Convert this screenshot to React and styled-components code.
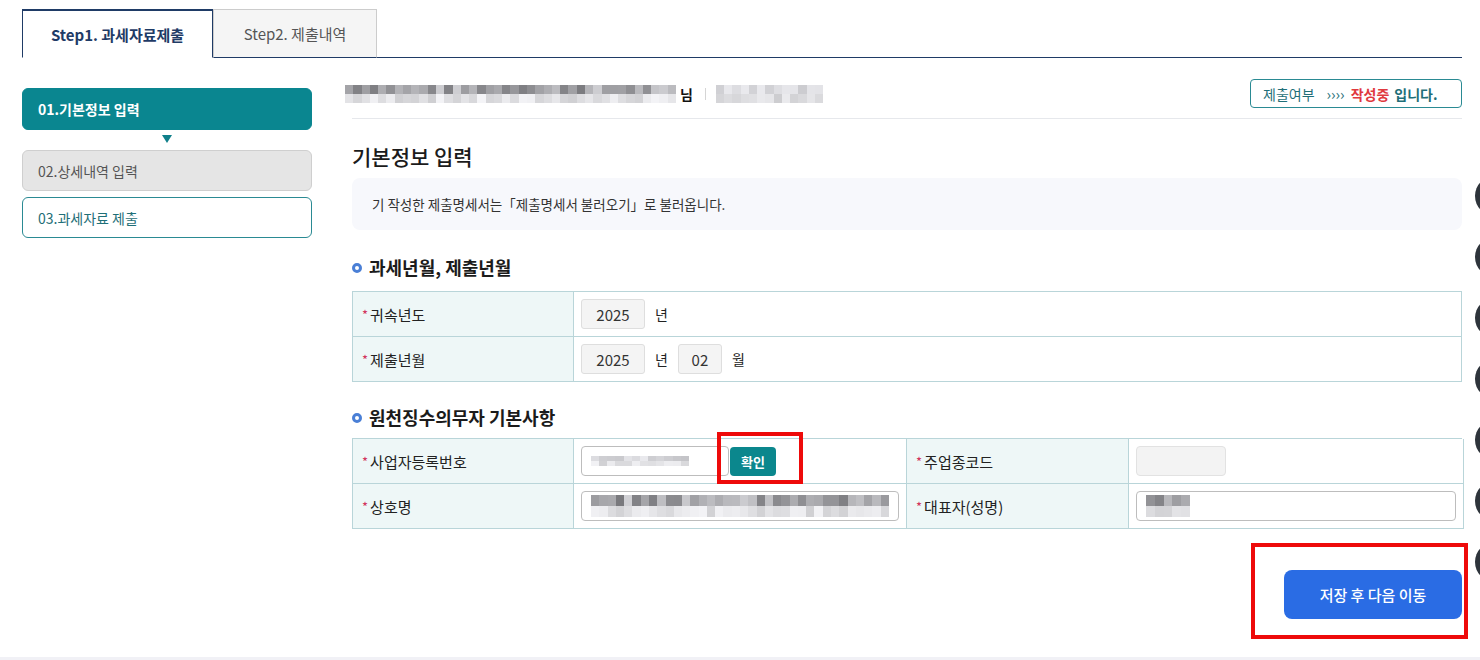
import React from 'react'
import styled, { createGlobalStyle } from 'styled-components';

const GlobalStyle = createGlobalStyle`
  html, body {
    margin: 0;
    padding: 0;
    overflow: hidden;
    background: #fff;
  }
  body {
    font-family: "Noto Sans CJK KR", "Noto Sans", sans-serif;
    color: #222;
  }
  * { box-sizing: border-box; }
`;

const NAVY = '#1f3b66';
const TEAL = '#0a8690';
const LINE = '#b9d5d9';

// pixelated blur blocks stand in for masked personal info
const mosaic = (seed, count, dark) => {
  let s = seed;
  const rnd = () => {
    s = (s * 9301 + 49297) % 233280;
    return s / 233280;
  };
  const step = 100 / count;
  const top = [];
  const bottom = [];
  for (let i = 0; i < count; i++) {
    const a = dark ? 120 + Math.floor(rnd() * 90) : 195 + Math.floor(rnd() * 40);
    const b = 205 + Math.floor(rnd() * 40);
    top.push(`rgb(${a},${a},${a + 4}) ${i * step}% ${(i + 1) * step}%`);
    bottom.push(`rgb(${b},${b},${b + 3}) ${i * step}% ${(i + 1) * step}%`);
  }
  return `linear-gradient(90deg, ${top.join(',')}) top / 100% 50% no-repeat, linear-gradient(90deg, ${bottom.join(',')}) bottom / 100% 50% no-repeat`;
};

const App = () => {
  return (
    <>
      <GlobalStyle />
      <Page>
        <TabBar>
          <Tab active>Step1. 과세자료제출</Tab>
          <Tab>Step2. 제출내역</Tab>
        </TabBar>

        <Body>
          <Sidebar>
            <StepItem variant='active'>01.기본정보 입력</StepItem>
            <StepArrow />
            <StepItem variant='disabled'>02.상세내역 입력</StepItem>
            <StepItem variant='outline'>03.과세자료 제출</StepItem>
          </Sidebar>

          <Main>
            <UserRow>
              <UserInfo>
                <Mosaic w={331} h={18} style={{ background: mosaic(7, 40, true) }} />
                <Nim>님</Nim>
                <Sep />
                <Mosaic w={107} h={18} style={{ background: mosaic(3, 13, false) }} />
              </UserInfo>
              <StatusBox>
                <span>제출여부</span>
                <Arrows>››››</Arrows>
                <Red>작성중</Red>
                <b>입니다.</b>
              </StatusBox>
            </UserRow>

            <PageTitle>기본정보 입력</PageTitle>
            <InfoBox>기 작성한 제출명세서는「제출명세서 불러오기」로 불러옵니다.</InfoBox>

            <SectionTitle mt={25} mb={12}>과세년월, 제출년월</SectionTitle>
            <FormGrid cols='221px 1fr'>
              <Label><Req>*</Req>귀속년도</Label>
              <Value>
                <YearBox w={64}>2025</YearBox>
                <Unit>년</Unit>
              </Value>
              <Label><Req>*</Req>제출년월</Label>
              <Value>
                <YearBox w={64}>2025</YearBox>
                <Unit>년</Unit>
                <YearBox w={44}>02</YearBox>
                <Unit>월</Unit>
              </Value>
            </FormGrid>

            <SectionTitle mt={23} mb={9}>원천징수의무자 기본사항</SectionTitle>
            <FormGrid cols='221px 333px 222px 1fr'>
              <Label><Req>*</Req>사업자등록번호</Label>
              <Value>
                <TextInput w={148}>
                  <Mosaic w={98} h={10} style={{ background: mosaic(11, 12, false) }} />
                </TextInput>
                <Marked inset='-15px -27px -8px -12px'>
                  <CheckButton>확인</CheckButton>
                </Marked>
              </Value>
              <Label><Req>*</Req>주업종코드</Label>
              <Value>
                <DisabledBox />
              </Value>
              <Label><Req>*</Req>상호명</Label>
              <Value>
                <TextInput w={320}>
                  <Mosaic w={298} h={22} style={{ background: mosaic(5, 36, true) }} />
                </TextInput>
              </Value>
              <Label><Req>*</Req>대표자(성명)</Label>
              <Value>
                <TextInput w={320}>
                  <Mosaic w={44} h={22} style={{ background: mosaic(2, 5, true) }} />
                </TextInput>
              </Value>
            </FormGrid>

            <Actions>
              <Marked inset='-27px -6px -20px -33px'>
                <PrimaryButton>저장 후 다음 이동</PrimaryButton>
              </Marked>
            </Actions>
          </Main>
        </Body>
        <Footer />
      </Page>

      <FloatRail>
        {[0, 1, 2, 3, 4, 5, 6].map((i) => <FloatDot key={i} />)}
      </FloatRail>
    </>
  )
}

const Page = styled.div`
  width: 1480px;
  height: 660px;
  padding: 9px 18px 0 22px;
  display: flex;
  flex-direction: column;
`;

const TabBar = styled.div`
  display: flex;
  border-bottom: 1px solid ${NAVY};
  height: 49px;
  flex-shrink: 0;
`;

const Tab = styled.div`
  height: 49px;
  margin-bottom: -1px;
  display: flex;
  align-items: center;
  justify-content: center;
  font-size: 15px;
  width: ${({ active }) => (active ? '191px' : '164px')};
  background: ${({ active }) => (active ? '#fff' : '#f5f5f5')};
  color: ${({ active }) => (active ? NAVY : '#555')};
  font-weight: ${({ active }) => (active ? 700 : 400)};
  border: 1px solid ${({ active }) => (active ? NAVY : '#cccccc')};
  border-top: ${({ active }) => (active ? `2px solid ${NAVY}` : '1px solid #cccccc')};
  border-bottom: ${({ active }) => (active ? '1px solid #fff' : `1px solid ${NAVY}`)};
  white-space: nowrap;
`;

const Body = styled.div`
  display: flex;
  gap: 40px;
  flex: 1;
`;

const Sidebar = styled.div`
  width: 290px;
  flex-shrink: 0;
  padding-top: 30px;
  display: flex;
  flex-direction: column;
`;

const StepItem = styled.div`
  height: ${({ variant }) => (variant === 'active' ? '42px' : '41px')};
  border-radius: 6px;
  display: flex;
  align-items: center;
  padding-left: 15px;
  font-size: 14px;
  margin-bottom: 6px;
  background: ${({ variant }) => (variant === 'active' ? TEAL : variant === 'disabled' ? '#e5e5e5' : '#fff')};
  color: ${({ variant }) => (variant === 'active' ? '#fff' : variant === 'disabled' ? '#555' : '#1f6f78')};
  font-weight: ${({ variant }) => (variant === 'active' ? 700 : 400)};
  border: 1px solid ${({ variant }) => (variant === 'active' ? TEAL : variant === 'disabled' ? '#cfcfcf' : '#2a8a93')};
`;

const StepArrow = styled.div`
  align-self: center;
  width: 0;
  height: 0;
  margin: -1px 0 7px;
  border-left: 5px solid transparent;
  border-right: 5px solid transparent;
  border-top: 8px solid #0f7f8a;
`;

const Main = styled.div`
  flex: 1;
  min-width: 0;
  padding-top: 21px;
  display: flex;
  flex-direction: column;
`;

const UserRow = styled.div`
  display: flex;
  align-items: center;
  justify-content: space-between;
  padding-bottom: 10px;
  border-bottom: 1px solid #e6e8ec;
  box-sizing: content-box;
  height: 29px;
`;

const UserInfo = styled.div`
  display: flex;
  align-items: center;
  margin-left: -7px;
`;

const Mosaic = styled.span`
  display: inline-block;
  flex-shrink: 0;
  width: ${({ w }) => w}px;
  height: ${({ h }) => h}px;
`;

const Nim = styled.span`
  font-size: 14px;
  font-weight: 700;
  margin-left: 4px;
  color: #111;
`;

const Sep = styled.span`
  width: 1px;
  height: 12px;
  background: #d5d5d5;
  margin: 0 10px 0 12px;
`;

const StatusBox = styled.div`
  height: 29px;
  width: 212px;
  border: 1px solid #2a8a93;
  border-radius: 4px;
  display: flex;
  align-items: center;
  padding-left: 12px;
  gap: 8px;
  font-size: 14px;
  color: #1f6f78;
  white-space: nowrap;
  b { font-weight: 700; margin-left: -3px; }
`;

const Arrows = styled.span`
  margin: 0 1px 0 4px;
  font-size: 15px;
  letter-spacing: 0;
`;

const Red = styled.b`
  color: #e0393e;
`;

const PageTitle = styled.h2`
  margin: 23px 0 8px;
  font-size: 21px;
  line-height: 28px;
  font-weight: 500;
  color: #1b1b1b;
`;

const InfoBox = styled.div`
  height: 52px;
  background: #f7f8fc;
  border-radius: 8px;
  display: flex;
  align-items: center;
  padding-left: 20px;
  font-size: 13.5px;
  color: #333;
`;

const SectionTitle = styled.h3`
  margin: ${({ mt }) => mt}px 0 ${({ mb }) => mb}px;
  font-size: 18px;
  line-height: 24px;
  font-weight: 700;
  color: #1b1b1b;
  display: flex;
  align-items: center;
  gap: 7px;
  &::before {
    content: '';
    width: 4px;
    height: 4px;
    border: 3px solid #4a7fd6;
    border-radius: 50%;
    margin-top: 1px;
  }
`;

const FormGrid = styled.div`
  display: grid;
  grid-template-columns: ${({ cols }) => cols};
  grid-auto-rows: 45px;
  border-top: 1px solid ${LINE};
  border-left: 1px solid ${LINE};
`;

const Label = styled.div`
  background: #eef7f7;
  border-right: 1px solid ${LINE};
  border-bottom: 1px solid ${LINE};
  display: flex;
  align-items: center;
  padding-left: 9px;
  font-size: 15px;
  color: #222;
`;

const Req = styled.span`
  color: #d2335c;
  font-size: 13px;
  margin-right: 2px;
  margin-top: 1px;
`;

const Value = styled.div`
  border-right: 1px solid ${LINE};
  border-bottom: 1px solid ${LINE};
  display: flex;
  align-items: center;
  padding: 0 7px;
`;

const YearBox = styled.div`
  width: ${({ w }) => w}px;
  height: 30px;
  background: #f4f4f4;
  border: 1px solid #dedede;
  border-radius: 3px;
  display: flex;
  align-items: center;
  justify-content: center;
  font-size: 15px;
  color: #333;
`;

const Unit = styled.span`
  font-size: 14px;
  color: #222;
  margin: 0 10px;
`;

const TextInput = styled.div`
  width: ${({ w }) => w}px;
  height: 30px;
  border: 1px solid #bdbdbd;
  border-radius: 4px;
  background: #fff;
  display: flex;
  align-items: center;
  padding-left: 9px;
  overflow: hidden;
`;

const Marked = styled.span`
  position: relative;
  display: inline-flex;
  &::after {
    content: '';
    position: absolute;
    inset: ${({ inset }) => inset};
    border: 4px solid #ee0a0a;
    pointer-events: none;
  }
`;

const CheckButton = styled.button`
  width: 46px;
  height: 29px;
  margin-left: 1px;
  border: none;
  border-radius: 4px;
  background: #0b878d;
  color: #fff;
  font-family: inherit;
  font-size: 13px;
  font-weight: 700;
  padding: 0;
`;

const DisabledBox = styled.div`
  width: 90px;
  height: 30px;
  background: #f3f3f3;
  border: 1px solid #e2e2e2;
  border-radius: 4px;
`;

const Actions = styled.div`
  display: flex;
  justify-content: flex-end;
  margin-top: 41px;
`;

const PrimaryButton = styled.button`
  width: 178px;
  height: 49px;
  border: none;
  border-radius: 8px;
  background: #2a6ce4;
  color: #fff;
  font-family: inherit;
  font-size: 15px;
  font-weight: 500;
`;

const Footer = styled.div`
  height: 3px;
  margin: 0 -18px 0 -22px;
  background: #f1f1f6;
`;

const FloatRail = styled.div`
  position: fixed;
  left: 1475px;
  top: 176px;
  display: flex;
  flex-direction: column;
  gap: 21px;
`;

const FloatDot = styled.div`
  width: 40px;
  height: 40px;
  border-radius: 50%;
  background: #2e343b;
`;

export default App
